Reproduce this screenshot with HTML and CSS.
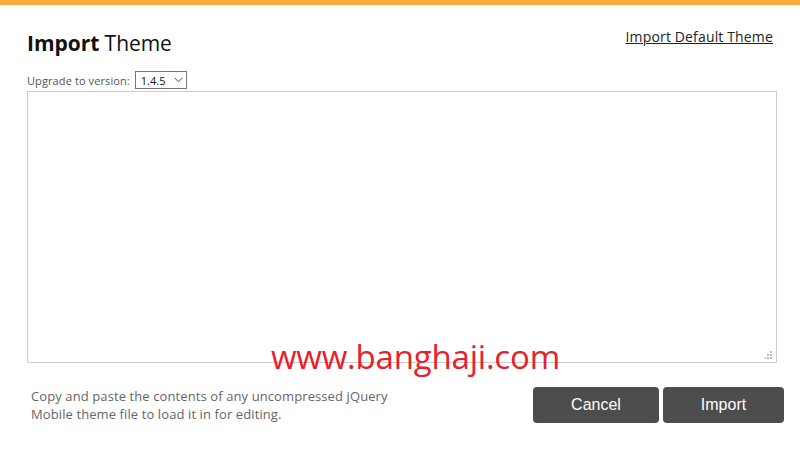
FILE: index.html
```html
<!DOCTYPE html>
<html>
<head>
<meta charset="utf-8">
<link rel="stylesheet" href="styles.css">
</head>
<body>
<div class="dialog">
  <div class="topbar"></div>
  <div class="content">
    <div class="header">
      <h1 class="title"><b>Import</b> Theme</h1>
      <a class="default-link" href="#">Import Default Theme</a>
    </div>
    <div class="version-row">
      <span class="version-label">Upgrade to version:</span>
      <span class="select">1.4.5
        <svg class="chev" width="9" height="6" viewBox="0 0 9 6"><path d="M0.5 0.8 L4.5 4.8 L8.5 0.8" fill="none" stroke="#444" stroke-width="1"/></svg>
      </span>
    </div>
    <div class="textarea">
      <svg class="grip" width="8" height="8" viewBox="0 0 8 8"><rect x="5" y="0" width="2" height="2" fill="#bbb"/><rect x="2" y="3" width="2" height="2" fill="#bbb"/><rect x="5" y="3" width="2" height="2" fill="#bbb"/><rect x="-1" y="6" width="2" height="2" fill="#bbb"/><rect x="2" y="6" width="2" height="2" fill="#bbb"/><rect x="5" y="6" width="2" height="2" fill="#bbb"/></svg>
    </div>
    <div class="footer">
      <p class="help">Copy and paste the contents of any uncompressed jQuery<br>Mobile theme file to load it in for editing.</p>
      <div class="buttons">
        <button class="btn cancel">Cancel</button>
        <button class="btn import">Import</button>
      </div>
    </div>
  </div>
  <div class="watermark">www.banghaji.com</div>
</div>
</body>
</html>
```
FILE: styles.css
```css
html, body { margin: 0; padding: 0; background: #fff; }
body { width: 800px; height: 449px; overflow: hidden; font-family: "Open Sans", "Noto Sans", sans-serif; }
.dialog { position: relative; width: 800px; height: 449px; }
.topbar { height: 5px; background: #f8ae3c; }
.content { padding: 0 16px 0 27px; }
.header { display: flex; justify-content: space-between; align-items: flex-start; height: 66px; }
.title { margin: 24px 0 0 0; font-size: 21px; font-weight: 400; color: #111; line-height: 28px; letter-spacing: -0.05px; }
.title b { font-weight: 700; }
.default-link { margin: 22px 11px 0 0; font-size: 14px; color: #222; text-decoration: underline; line-height: 20px; letter-spacing: 0.15px; }
.version-row { display: flex; align-items: center; height: 18px; }
.version-label { font-size: 11px; color: #555; margin-right: 5px; letter-spacing: 0.1px; }
.select { display: flex; align-items: center; box-sizing: border-box; width: 52px; height: 18px; border: 1px solid #777; padding: 0 0 0 5px; font-size: 11px; color: #111; }
.chev { margin-left: 9px; }
.textarea { position: relative; box-sizing: border-box; width: 750px; height: 272px; margin-top: 2px; border: 1px solid #ccc; }
.grip { position: absolute; right: 3px; bottom: 3px; }
.footer { display: flex; justify-content: space-between; align-items: flex-start; margin-top: 24px; }
.help { margin: 0 0 0 4px; font-size: 13px; line-height: 18px; color: #666; letter-spacing: 0.1px; }
.buttons { display: flex; gap: 4px; margin-right: 0; }
.btn { height: 36px; border: none; border-radius: 4px; background: #4d4d4d; color: #fff; font-family: "Liberation Sans", Arial, sans-serif; font-size: 16px; padding: 0; }
.cancel { width: 126px; }
.import { width: 121px; }
.watermark { position: absolute; left: 271px; top: 334px; font-family: "Open Sans", "Noto Sans", sans-serif; font-size: 33px; color: #e8202a; letter-spacing: -0.2px; }
```
